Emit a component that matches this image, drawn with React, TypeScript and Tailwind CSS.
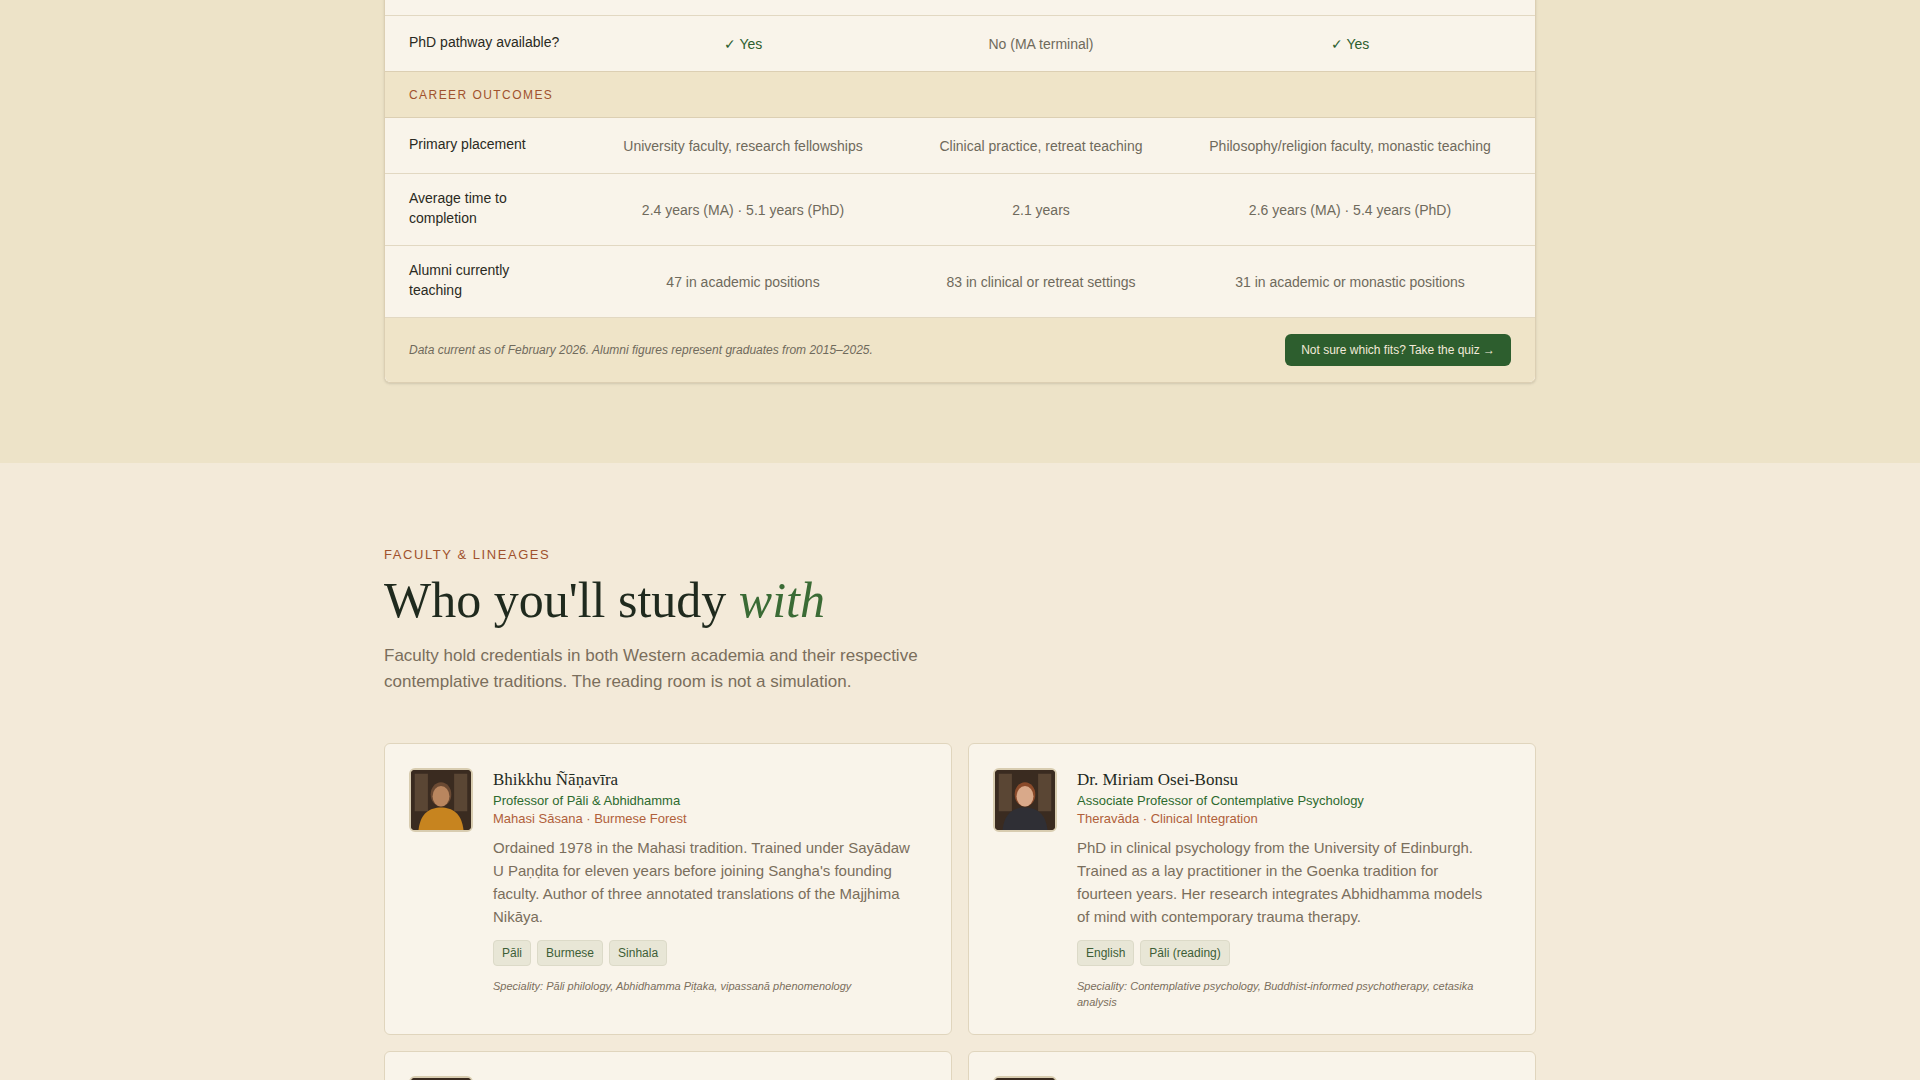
import React from 'react';

const rows = [
  { label: 'Primary placement', a: 'University faculty, research fellowships', b: 'Clinical practice, retreat teaching', c: 'Philosophy/religion faculty, monastic teaching', tall: false },
  { label: 'Average time to completion', a: '2.4 years (MA) · 5.1 years (PhD)', b: '2.1 years', c: '2.6 years (MA) · 5.4 years (PhD)', tall: true },
  { label: 'Alumni currently teaching', a: '47 in academic positions', b: '83 in clinical or retreat settings', c: '31 in academic or monastic positions', tall: true },
];

const faculty = [
  {
    name: 'Bhikkhu Ñāṇavīra',
    role: 'Professor of Pāli & Abhidhamma',
    lineage: 'Mahasi Sāsana · Burmese Forest',
    bio: "Ordained 1978 in the Mahasi tradition. Trained under Sayādaw U Paṇḍita for eleven years before joining Sangha's founding faculty. Author of three annotated translations of the Majjhima Nikāya.",
    tags: ['Pāli', 'Burmese', 'Sinhala'],
    spec: 'Speciality: Pāli philology, Abhidhamma Piṭaka, vipassanā phenomenology',
    robe: '#c7841f', hair: '#6b4a33', skin: '#b9865f',
  },
  {
    name: 'Dr. Miriam Osei-Bonsu',
    role: 'Associate Professor of Contemplative Psychology',
    lineage: 'Theravāda · Clinical Integration',
    bio: 'PhD in clinical psychology from the University of Edinburgh. Trained as a lay practitioner in the Goenka tradition for fourteen years. Her research integrates Abhidhamma models of mind with contemporary trauma therapy.',
    tags: ['English', 'Pāli (reading)'],
    spec: 'Speciality: Contemplative psychology, Buddhist-informed psychotherapy, cetasika analysis',
    robe: '#2f2f35', hair: '#8a4a2a', skin: '#d9a98a',
  },
  { name: 'Prof. Takehiro Yamamoto', role: '', lineage: '', bio: '', tags: [], spec: '', robe: '#3a3a3a', hair: '#222', skin: '#c9a07e' },
  { name: 'Dr. Ananda Krishnamurthy', role: '', lineage: '', bio: '', tags: [], spec: '', robe: '#5a4030', hair: '#222', skin: '#9a6a48' },
];

function Avatar({ robe, hair, skin }: { robe: string; hair: string; skin: string }) {
  return (
    <div className="w-16 h-16 shrink-0 rounded-md border-2 border-[#d8ccb0] overflow-hidden bg-[#3b2a1e]">
      <svg viewBox="0 0 64 64" className="w-full h-full">
        <rect width="64" height="64" fill="#3a2b20" />
        <rect x="4" y="4" width="14" height="40" fill="#5a4634" />
        <rect x="46" y="4" width="14" height="40" fill="#5a4634" />
        <ellipse cx="32" cy="26" rx="11" ry="13" fill={hair} />
        <ellipse cx="32" cy="28" rx="9" ry="11" fill={skin} />
        <path d="M8 64 C10 46 20 40 32 40 C44 40 54 46 56 64 Z" fill={robe} />
      </svg>
    </div>
  );
}

export default function App() {
  return (
    <div className="min-h-screen bg-[#f3ead9] font-[family-name:Liberation_Sans,Arial,sans-serif] overflow-hidden">
      {/* comparison table tail */}
      <section className="bg-[#ede3c8] pb-20">
        <div className="max-w-6xl mx-auto bg-[#f9f4ea] border border-t-0 border-[#dccfb3] rounded-b-md shadow-sm -mt-10">
          <div className="h-14 border-b border-[#e2d8c2]" />
          <div className="grid grid-cols-[184px_300px_296px_1fr] px-6 h-14 items-center border-b border-[#dccfb3] text-sm">
            <div className="text-[#2a2a22] -mt-1">PhD pathway available?</div>
            <div className="text-center text-[#2d5e2e]">✓ Yes</div>
            <div className="text-center text-[#6f6a5c]">No (MA terminal)</div>
            <div className="text-center text-[#2d5e2e]">✓ Yes</div>
          </div>
          <div className="bg-[#efe4c8] h-[46px] px-6 flex items-center border-b border-[#dccfb3] text-xs tracking-[0.12em] text-[#a0522d]">
            CAREER OUTCOMES
          </div>
          {rows.map((r) => (
            <div key={r.label} className={`grid grid-cols-[184px_300px_296px_1fr] px-6 items-center border-b border-[#e2d8c2] text-sm ${r.tall ? 'h-[72px]' : 'h-14'}`}>
              <div className="text-[#2a2a22] leading-5 pr-12 -mt-1">{r.label}</div>
              <div className="text-center text-[#6f6a5c]">{r.a}</div>
              <div className="text-center text-[#6f6a5c]">{r.b}</div>
              <div className="text-center text-[#6f6a5c]">{r.c}</div>
            </div>
          ))}
          <div className="bg-[#efe4c8] h-16 px-6 flex items-center justify-between rounded-b-md">
            <p className="text-xs italic text-[#6f6a5c]">Data current as of February 2026. Alumni figures represent graduates from 2015–2025.</p>
            <button className="bg-[#2d5e2e] text-[#f3ead9] text-xs px-4 h-8 rounded-md">Not sure which fits? Take the quiz →</button>
          </div>
        </div>
      </section>

      {/* faculty */}
      <section className="pt-[82px]">
        <div className="max-w-6xl mx-auto">
          <p className="text-[13px] tracking-[0.12em] text-[#a0522d]">FACULTY &amp; LINEAGES</p>
          <h2 className="mt-1 font-[family-name:Liberation_Serif,serif] text-[50px] leading-tight text-[#1f2a1e]">
            Who you'll study <em className="text-[#3a6b35]">with</em>
          </h2>
          <p className="mt-3 max-w-[540px] text-[17px] leading-[26px] text-[#7a6e5c]">
            Faculty hold credentials in both Western academia and their respective contemplative traditions. The reading room is not a simulation.
          </p>
          <div className="mt-12 grid grid-cols-2 gap-4">
            {faculty.map((f, i) => (
              <div key={f.name} className={`bg-[#f9f4ea] border border-[#e0d5bd] rounded-md p-6 flex gap-5 ${i < 2 ? 'min-h-[284px]' : 'h-[200px]'}`}>
                <Avatar robe={f.robe} hair={f.hair} skin={f.skin} />
                <div className="flex-1">
                  <h3 className="font-[family-name:Liberation_Serif,serif] text-[17px] text-[#1f2a1e] leading-6">{f.name}</h3>
                  <p className="text-[13px] text-[#2d6a2e] leading-[18px]">{f.role}</p>
                  <p className="text-[13px] text-[#b0603a] leading-[18px]">{f.lineage}</p>
                  {f.bio && <p className="mt-2 text-[15px] leading-[23px] text-[#7a6e5c] pr-4">{f.bio}</p>}
                  {f.tags.length > 0 && (
                    <div className="mt-3 flex gap-1.5">
                      {f.tags.map((t) => (
                        <span key={t} className="bg-[#e8e6d6] border border-[#dcdac8] rounded text-xs text-[#3d5e36] px-2 py-1">{t}</span>
                      ))}
                    </div>
                  )}
                  {f.spec && <p className="mt-3 text-[11px] italic leading-4 text-[#7a6e5c] pr-6">{f.spec}</p>}
                </div>
              </div>
            ))}
          </div>
        </div>
      </section>
    </div>
  );
}
